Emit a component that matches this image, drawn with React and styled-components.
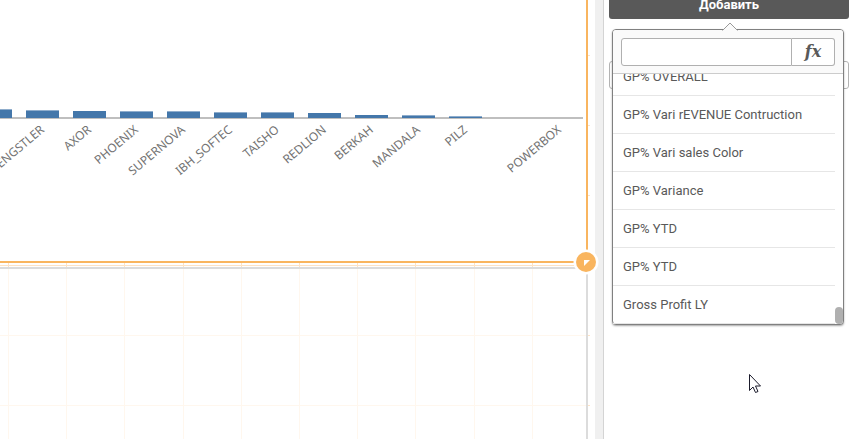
import React, { useState } from 'react'
import styled, { createGlobalStyle } from 'styled-components'

const BARS = [
  { label: '', height: 9, faded: true },
  { label: 'HENGSTLER', height: 8, faded: true },
  { label: 'AXOR', height: 7 },
  { label: 'PHOENIX', height: 7, faded: true },
  { label: 'SUPERNOVA', height: 7, faded: true },
  { label: 'IBH_SOFTEC', height: 6, faded: true },
  { label: 'TAISHO', height: 6, faded: true },
  { label: 'REDLION', height: 5 },
  { label: 'BERKAH', height: 3 },
  { label: 'MANDALA', height: 3, faded: true },
  { label: 'PILZ', height: 2, faded: true },
  { label: '', height: 0 },
  { label: 'POWERBOX', height: 0 }
]

const MEASURES = [
  'GP% OVERALL',
  'GP% Vari rEVENUE Contruction',
  'GP% Vari sales Color',
  'GP% Variance',
  'GP% YTD',
  'GP% YTD',
  'Gross Profit LY'
]

const GRID_X = [8, 66, 124, 183, 241, 299, 357, 415, 474, 532]
const GRID_Y = [55, 125, 195, 265, 335, 405]

const BAR_STEP = 47
const BAR_WIDTH = 33
const AXIS_Y = 118

const BarChart = () => (
  <ChartSvg viewBox="0 0 586 261" preserveAspectRatio="xMinYMin meet" role="img" aria-label="Bar chart">
    <rect x="0" y="117" width="583" height="2" fill="#bfbfbf" />
    {BARS.map((bar, index) => {
      const x = index * BAR_STEP - 21
      const top = AXIS_Y - bar.height
      const labelX = x + 19
      return (
        <g key={index}>
          <rect x={x} y={top} width={BAR_WIDTH} height={bar.height} fill="#4477aa" />
          {bar.faded && <rect x={x} y={top} width={BAR_WIDTH} height="1" fill="#8fadcc" />}
          <AxisLabel x={labelX} y="131" transform={`rotate(-40 ${labelX} 131)`}>
            {bar.label}
          </AxisLabel>
        </g>
      )
    })}
  </ChartSvg>
)

const SheetGrid = () => (
  <GridSvg aria-hidden="true">
    {GRID_X.map((x) => (
      <rect key={x} x={x} y="0" width="1" height="100%" />
    ))}
    {GRID_Y.map((y) => (
      <rect key={y} x="0" y={y} width="100%" height="1" />
    ))}
  </GridSvg>
)

const MeasurePicker = () => {
  const [query, setQuery] = useState('')
  const items = MEASURES.filter((name) => name.toLowerCase().includes(query.toLowerCase()))
  return (
    <Popover>
      <Arrow viewBox="0 0 16 9" aria-hidden="true">
        <path d="M0 9 L1 8 L8 1 L15 8 L16 9 Z" fill="#fafafa" />
        <path d="M0.5 8.5 L8 1 L15.5 8.5" fill="none" stroke="#999" />
      </Arrow>
      <SearchBar>
        <SearchInput aria-label="Search" value={query} onChange={(e) => setQuery(e.target.value)} />
        <FxButton type="button" aria-label="Expression">
          fx
        </FxButton>
      </SearchBar>
      <ListArea>
        <List>
          {items.map((name, index) => (
            <Item key={index}>
              <ItemButton type="button">{name}</ItemButton>
            </Item>
          ))}
        </List>
        <ScrollThumb />
      </ListArea>
    </Popover>
  )
}

const App = () => (
  <Page>
    <GlobalStyle />
    <Sheet>
      <SheetGrid />
      <SelectedObject>
        <BarChart />
        <ResizeHandle viewBox="0 0 26 26" aria-hidden="true">
          <circle cx="13" cy="13" r="12.5" fill="#fff" />
          <circle cx="13" cy="13" r="10" fill="#f9b55f" />
          <path d="M11 11 H17 L11 17 Z" fill="#fff" />
        </ResizeHandle>
      </SelectedObject>
      <EmptyObject />
    </Sheet>
    <Gutter />
    <Panel>
      <AddButton type="button">Добавить</AddButton>
      <PanelField aria-label="Label" />
      <MeasurePicker />
    </Panel>
    <Pointer viewBox="0 0 14 22" aria-hidden="true">
      <path
        d="M1.5 1.5 V17.5 L5 14 L7.5 19.5 L10 18.5 L7.5 13 H12.5 Z"
        fill="#fff"
        stroke="#1b1b2b"
        strokeLinejoin="round"
      />
    </Pointer>
  </Page>
)

export default App

const GlobalStyle = createGlobalStyle`
  * {
    box-sizing: border-box;
  }
  body {
    margin: 0;
    background: #fff;
    font-family: Roboto, 'Liberation Sans', sans-serif;
  }
`

const Page = styled.div`
  position: relative;
  display: flex;
  min-height: 100vh;
  overflow: hidden;
`

const Sheet = styled.main`
  position: relative;
  flex: 1;
  min-width: 0;
  display: flex;
  flex-direction: column;
  gap: 4px;
  margin-right: 5px;
  padding-right: 2px;
`

const GridSvg = styled.svg`
  position: absolute;
  top: 0;
  left: 0;
  width: 100%;
  height: 100%;
  fill: #fde3c6;
`

const SelectedObject = styled.section`
  position: relative;
  background: #fff;
  border-right: 2px solid #f9b55f;
  border-bottom: 2px solid #f9b55f;
`

const EmptyObject = styled.section`
  position: relative;
  flex: 1;
  background: rgba(255, 255, 255, 0.7);
  border-top: 2px solid #dcdcdc;
  border-right: 2px solid #dcdcdc;
`

const ChartSvg = styled.svg`
  display: block;
  width: 100%;
  height: 261px;
`

const AxisLabel = styled.text`
  font-family: 'Noto Sans', sans-serif;
  font-size: 12px;
  fill: #737373;
  text-anchor: end;
`

const ResizeHandle = styled.svg`
  position: absolute;
  right: -13px;
  bottom: -14px;
  width: 26px;
  height: 26px;
  z-index: 1;
`

const Gutter = styled.div`
  width: 9px;
  background: #f0f0f0;
  border-right: 1px solid #d4d4d4;
`

const Panel = styled.aside`
  position: relative;
  width: 245px;
  padding-left: 5px;
`

const AddButton = styled.button`
  display: block;
  width: 100%;
  height: 28px;
  margin-top: -9px;
  padding: 0;
  border: 0;
  border-radius: 3px;
  background: #595959;
  color: #fff;
  font-family: Roboto, sans-serif;
  font-size: 13px;
  font-weight: 700;
  line-height: 28px;
`

const PanelField = styled.input`
  display: block;
  width: 100%;
  height: 28px;
  margin-top: 42px;
  border: 1px solid #b3b3b3;
  border-radius: 3px;
`

const Popover = styled.div`
  position: absolute;
  top: 29px;
  left: 8px;
  right: 5px;
  background: #fff;
  border: 1px solid #808080;
  border-radius: 4px;
  box-shadow: 0 1px 2px rgba(0, 0, 0, 0.35);
`

const Arrow = styled.svg`
  position: absolute;
  top: -8px;
  left: calc(50% - 6px);
  width: 16px;
  height: 9px;
`

const SearchBar = styled.div`
  display: flex;
  padding: 8px 8px 7px;
  background: #fafafa;
  border-bottom: 1px solid #ccc;
  border-radius: 3px 3px 0 0;
`

const SearchInput = styled.input`
  flex: 1;
  min-width: 0;
  height: 28px;
  padding: 0 8px;
  border: 1px solid #b0b0b0;
  border-radius: 3px 0 0 3px;
  background: #fff;
  font-size: 13px;
`

const FxButton = styled.button`
  width: 43px;
  height: 28px;
  padding: 0;
  border: 1px solid #b0b0b0;
  border-left: 0;
  border-radius: 0 3px 3px 0;
  background: #fff;
  color: #595959;
  font: italic 700 16px 'DejaVu Serif', serif;
  line-height: 24px;
`

const ListArea = styled.div`
  position: relative;
  display: flex;
  flex-direction: column;
  justify-content: flex-end;
  height: 250px;
  overflow: hidden;
`

const List = styled.ul`
  margin: 0;
  padding: 0 8px 0 0;
  list-style: none;
`

const Item = styled.li`
  border-bottom: 1px solid #e6e6e6;
`

const ItemButton = styled.button`
  display: block;
  width: 100%;
  height: 37px;
  padding: 0 10px;
  border: 0;
  background: none;
  color: #595959;
  font-family: Roboto, sans-serif;
  font-size: 13px;
  text-align: left;
`

const ScrollThumb = styled.div`
  position: absolute;
  right: 0;
  bottom: 0;
  width: 8px;
  height: 17px;
  border-radius: 4px;
  background: #b0b0b0;
`

const Pointer = styled.svg`
  position: absolute;
  top: 373px;
  left: 748px;
  width: 14px;
  height: 22px;
`
